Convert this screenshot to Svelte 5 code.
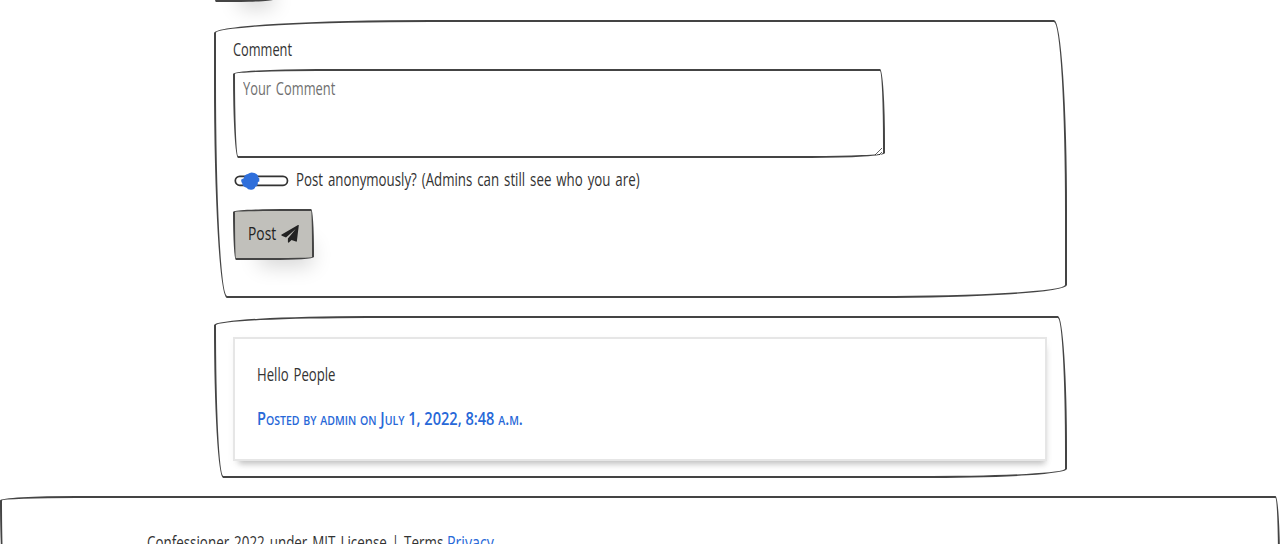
<script lang="ts">
	let comment = '';
	let anonymous = false;

	const comments = [
		{ body: 'Hello People', author: 'admin', date: 'July 1, 2022, 8:48 a.m.' }
	];
</script>

<div class="page">
	<div class="container">
		<div class="previous"><div class="btn stub sketch"></div></div>

		<form class="sketch form" on:submit|preventDefault>
			<label class="lbl" for="comment"><span class="t t-label">Comment</span></label>
			<div class="field">
				<textarea id="comment" class="sketch" bind:value={comment}></textarea>
				{#if !comment}
					<span class="t hint">Your Comment</span>
				{/if}
			</div>
			<label class="switch">
				<input type="checkbox" bind:checked={anonymous} />
				<svg width="56" height="20" viewBox="0 0 56 20">
					<rect x="2.3" y="5.3" width="52.2" height="9" rx="4.5" fill="#fff" stroke="#333" stroke-width="1.7" />
					<path d="M8.300 8.5 L10.800 7.2 Q11.300 3.500 14.800 3 Q17.800 .4 21.300 2 Q25.300 3 25.400 6.800 L26.300 7.300 V10.500 L24.800 11 Q25.300 15 22.600 15.500 Q21.300 19 17.800 18.700 Q14.800 18.500 13.600 16.700 Q9.300 15.500 9.300 12.500 Q7.800 10.500 8.300 8.500Z" fill="#2f6fdb" />
				</svg>
				<span class="t t-switch">Post anonymously? (Admins can still see who you are)</span>
			</label>
			<button class="btn sketch" type="submit">
				<span class="t t-post">Post</span>
				<svg width="18" height="18" viewBox="0 0 18 18">
					<path d="M17.800 .3 L15.900 16.100 Q15.700 16.900 14.900 16.500 L10.500 14.900 L8.200 17.300 Q7.200 18.200 6.900 17 V13.500 L14.700 3.900 L5 12.400 L.8 10.700 Q-.3 10.200 .7 9.500 L17 .1 Q17.700 -.2 17.800 .3Z" fill="#222" />
				</svg>
			</button>
		</form>

		<div class="sketch list">
			{#each comments as c}
				<div class="card">
					<p><span class="t t-body">{c.body}</span></p>
					<p class="meta"><span class="t t-meta">Posted by {c.author} on {c.date}</span></p>
				</div>
			{/each}
		</div>
	</div>

	<footer class="sketch">
		<span class="t t-foot">Confessioner 2022 under MIT License | Terms</span>
		<a href="#privacy"><span class="t t-priv">Privacy</span></a>
	</footer>
</div>

<style>
	:global(body) {
		background: #fff;
		overflow: hidden;
	}
	.page {
		height: 544px;
		overflow: hidden;
		color: #333;
		font-family: 'Open Sans', sans-serif;
		font-size: 18px;
		line-height: 25px;
	}
	.container {
		width: 853px;
		margin: 0 auto;
	}
	.sketch {
		box-sizing: border-box;
		border: 2px solid #444;
		border-radius: 217px 13px 191px 13px / 13px 191px 13px 217px;
	}
	/* condensed lettering */
	.t {
		display: inline-block;
		white-space: nowrap;
		word-spacing: 2px;
		transform-origin: left center;
	}
	.t-label {
		transform: scaleX(.71);
	}
	.t-switch {
		transform: scaleX(.738);
	}
	.t-post {
		width: 29px;
		transform: scaleX(.77);
	}
	.t-body {
		transform: scaleX(.73);
	}
	.t-meta {
		word-spacing: 0;
		transform: scaleX(.81);
	}
	.t-foot {
		width: 295px;
		transform: scaleX(.744);
	}
	.t-priv {
		transform: scaleX(.79);
	}
	.previous {
		height: 20px;
		display: flex;
		align-items: flex-start;
	}
	.stub {
		width: 62px;
		height: 51px;
		margin-top: -49px;
		margin-left: -1px;
	}
	.form {
		height: 278px;
		padding: 15px 17px;
		display: flex;
		flex-direction: column;
		align-items: flex-start;
	}
	.lbl {
		margin-bottom: 7px;
	}
	.field {
		position: relative;
	}
	textarea {
		display: block;
		width: 652px;
		height: 89px;
		padding: 6px 9px;
		margin: 0;
		background: #fff;
		font: inherit;
		color: #333;
		outline: none;
	}
	.hint {
		position: absolute;
		top: 7px;
		left: 10px;
		color: #707070;
		pointer-events: none;
		transform: scaleX(.715);
	}
	.switch {
		display: flex;
		align-items: center;
		margin-top: 9px;
		height: 25px;
	}
	.switch input {
		display: none;
	}
	.switch svg {
		margin-right: 7px;
		margin-top: 2px;
	}
	.btn {
		background: #c1c0bb;
		box-shadow: 12px 20px 20px -14px rgba(0, 0, 0, .17);
	}
	button {
		display: flex;
		align-items: center;
		justify-content: space-between;
		width: 81px;
		height: 51px;
		margin-top: 17px;
		padding: 0 13px 2px;
		font: inherit;
		color: #222;
	}
	.list {
		height: 162px;
		margin-top: 18px;
		padding: 19px 18px 19px 17px;
	}
	.card {
		box-sizing: border-box;
		height: 124px;
		padding: 23px 22px;
		border: 2px solid #e6e6e6;
		background: #fff;
		box-shadow: 2px 7px 6px -4px rgba(0, 0, 0, .22), 0 3px 8px rgba(0, 0, 0, .04);
	}
	p {
		margin: 0 0 19px;
	}
	.meta {
		color: #2768d8;
		font-variant: small-caps;
		font-weight: 600;
	}
	footer {
		width: 1280px;
		height: 81px;
		margin-top: 18px;
		padding: 32px 145px;
		display: flex;
		gap: 5px;
	}
	a {
		color: #2768d8;
		text-decoration: none;
	}
</style>
